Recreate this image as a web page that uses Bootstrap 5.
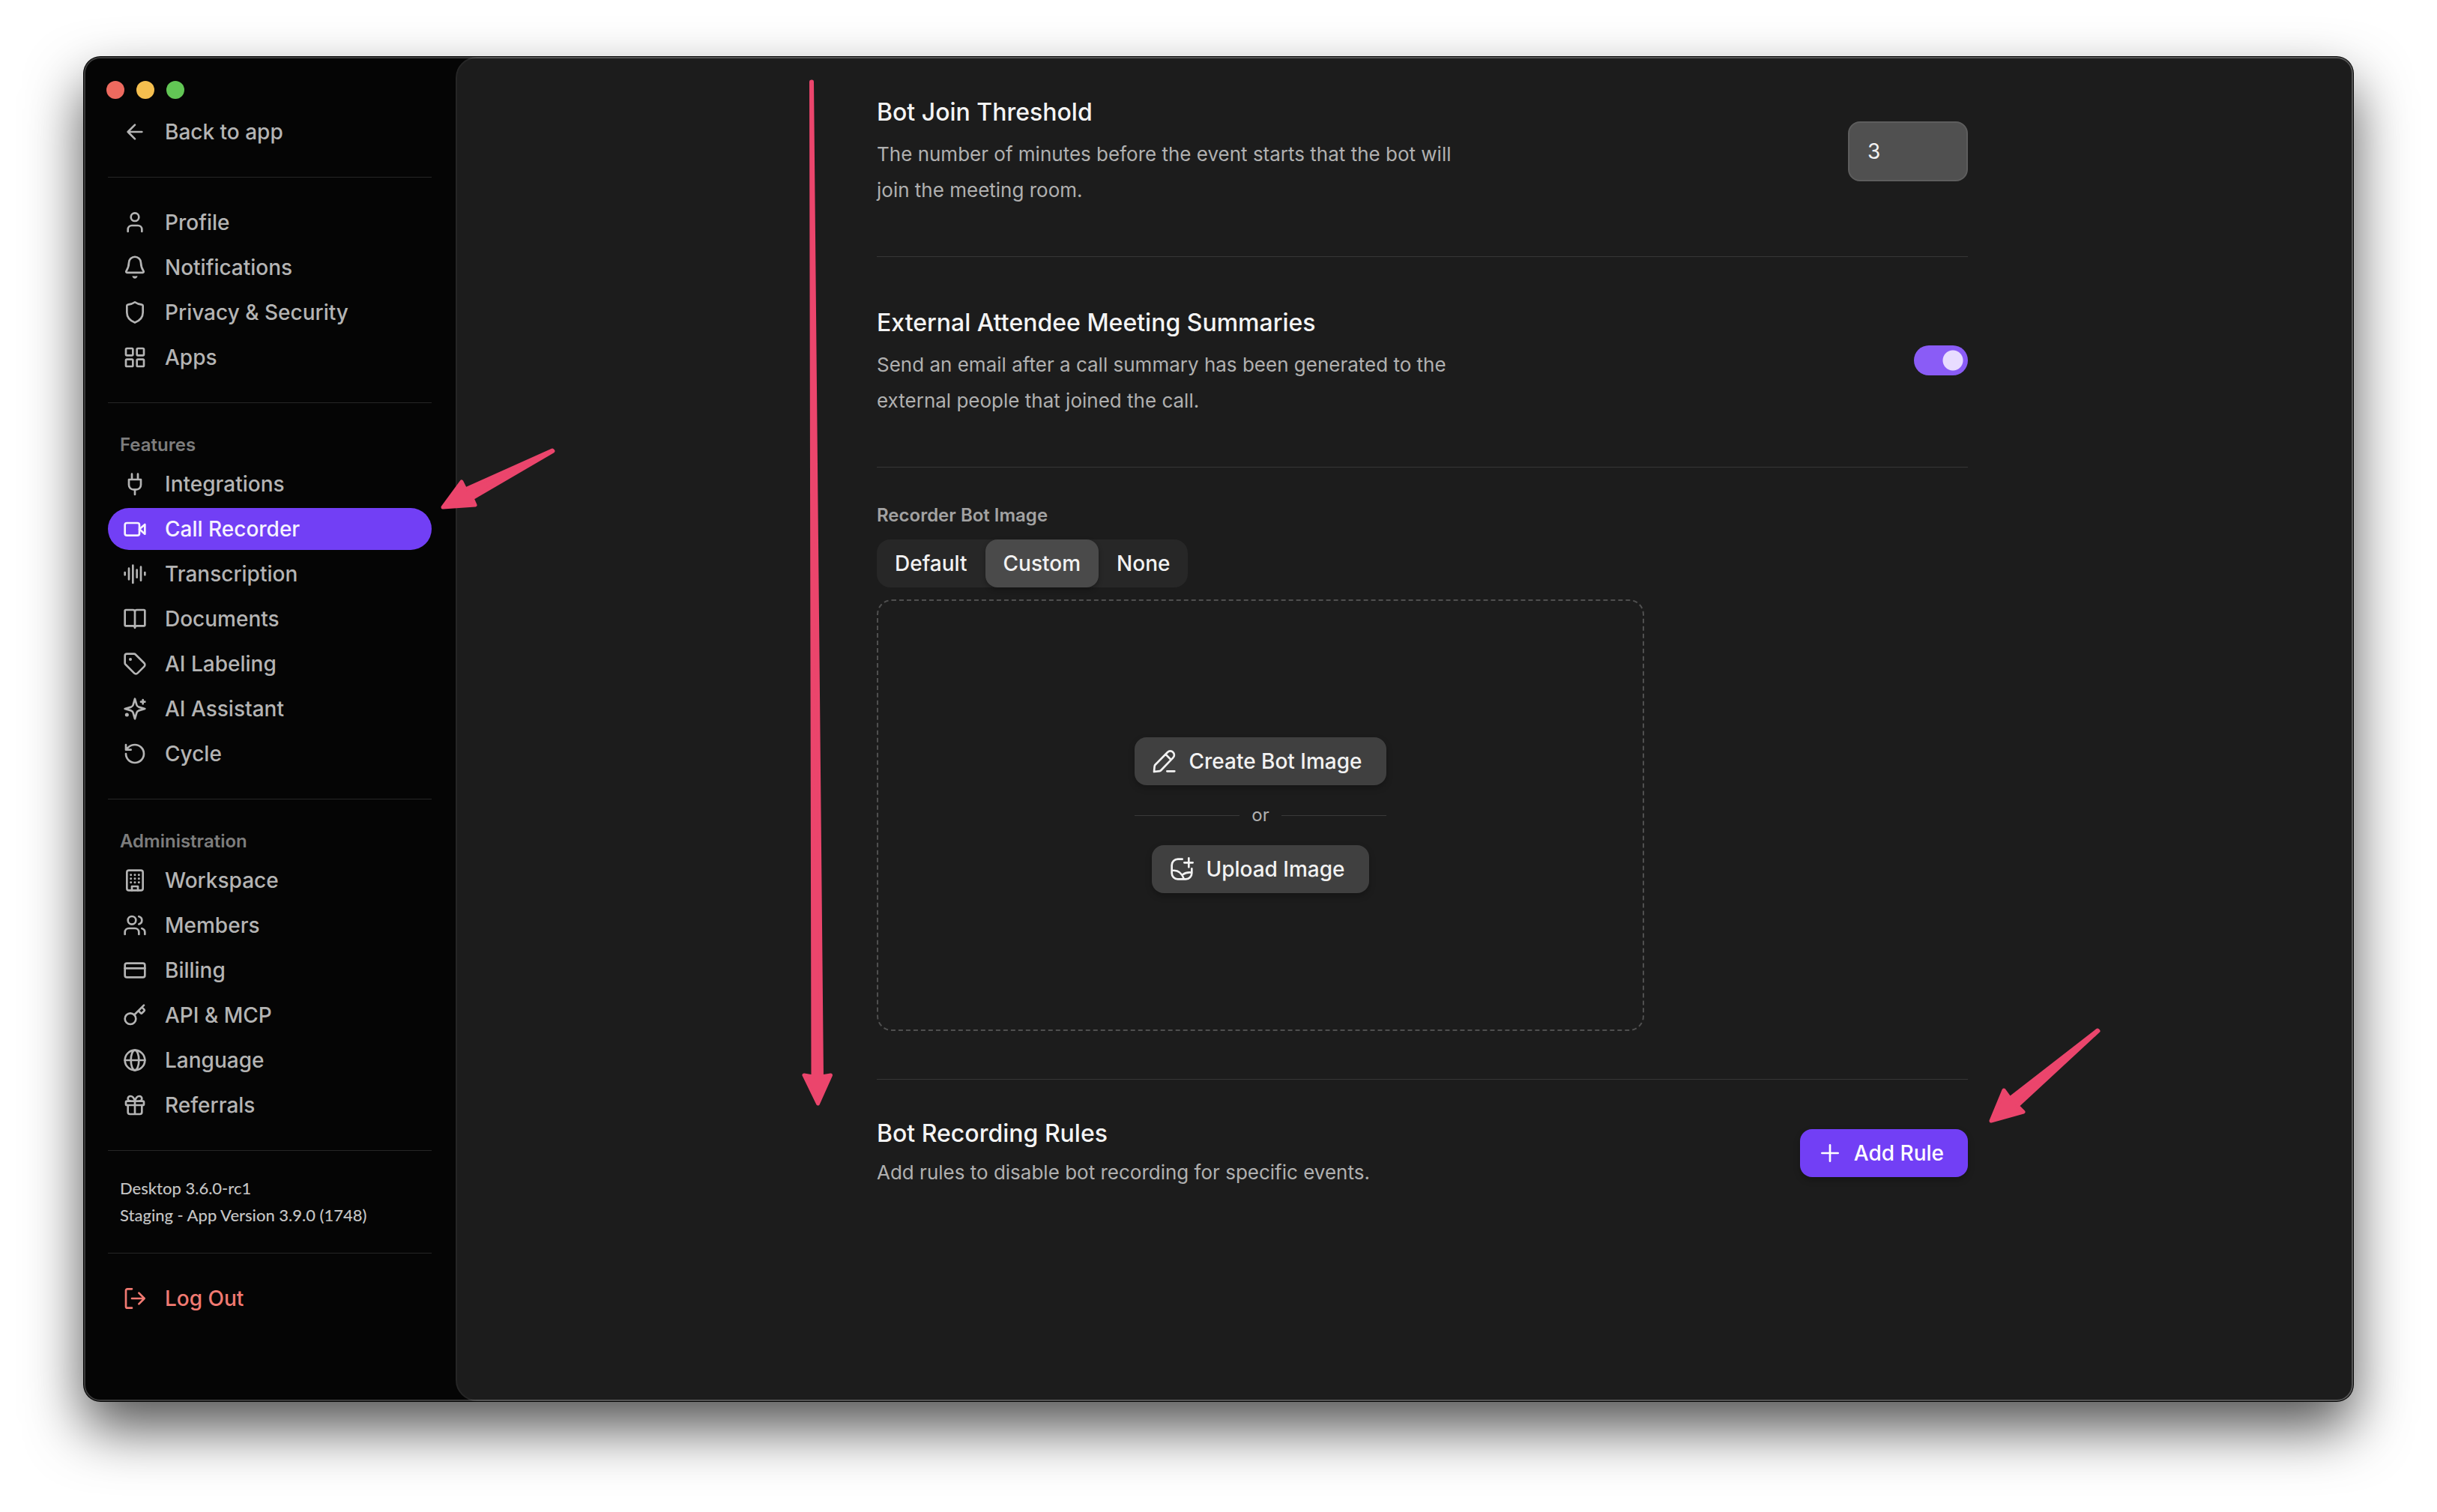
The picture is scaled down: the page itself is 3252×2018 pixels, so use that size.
<!DOCTYPE html>
<html lang="en" data-bs-theme="dark">
<head>
<meta charset="utf-8">
<meta name="viewport" content="width=device-width, initial-scale=1">
<title>Settings – Call Recorder</title>
<link href="https://cdn.jsdelivr.net/npm/bootstrap@5.3.0/dist/css/bootstrap.min.css" rel="stylesheet">
<style>
  :root { --accent: #723ff5; --line: #363636; --muted: #b0b0b0; --bright: #f2f2f2; }
  body { background: #fff; font-family: Inter, "Liberation Sans", sans-serif; font-size: 28px; line-height: 40px; color: var(--bright); }
  hr { border-top: 1px solid var(--line); opacity: 1; }
  svg.ico { width: 32px; height: 32px; flex: none; fill: none; stroke: currentColor; stroke-width: 2; stroke-linecap: round; stroke-linejoin: round; }
  svg.ico .solid { fill: currentColor; stroke: none; }

  .stage { min-height: 100vh; padding: 76px 112px 148px; }
  .app-window { background: #050505; border-radius: 22px; box-shadow: 0 0 0 1px #000, 0 36px 76px rgba(0,0,0,.68); }
  .app-window::after { content: ""; position: absolute; inset: 0; border: 2px solid rgba(255,255,255,.22); border-radius: inherit; pointer-events: none; }

  .side { width: 496px; padding: 32px; flex: none; }
  .side hr { margin: 32px 0; border-color: #262626; }
  .lights { height: 24px; gap: 16px; margin: 0 0 16px -2px; }
  .light { width: 24px; height: 24px; border-radius: 50%; }
  .side .nav { gap: 4px; }
  .side .nav-link { display: flex; align-items: center; gap: 24px; height: 56px; padding: 0 20px; border-radius: 28px; color: #b4b4b4; font-weight: 500; white-space: nowrap; }
  .side .nav-link.active { background: var(--accent); color: #f6f2ff; }
  .side .nav-link.logout { color: #f17a72; }
  .side h2 { font-size: 24px; line-height: 48px; font-weight: 600; color: #7d7d7d; padding-left: 16px; margin: 0; }
  .versions { font-family: Lato, sans-serif; font-size: 22px; line-height: 36px; font-weight: 500; color: #c4c4c4; padding-left: 16px; white-space: nowrap; }

  .panel { background: #1c1c1c; border: 2px solid #262626; border-radius: 28px 22px 22px 28px; padding: 48px 0 48px 48px; }
  .settings { width: 100%; max-width: 1456px; margin: 0 auto; }
  .settings hr { margin: 64px 0; }
  .settings hr.before-group { margin-bottom: 48px; }
  .setting-title { font-size: 32px; line-height: 48px; font-weight: 500; margin: 0; color: #f4f4f4; }
  .setting-text { font-size: 26px; line-height: 48px; color: var(--muted); margin: 0; max-width: 780px; }
  .minutes { width: 160px; height: 80px; padding: 0 24px; border: 2px solid #5d5d5d; border-radius: 16px; background: #505050; color: var(--bright); font-size: 28px; appearance: textfield; }
  .minutes:focus { background: #505050; color: var(--bright); }
  .minutes::-webkit-inner-spin-button { appearance: none; }
  .toggle.form-check-input { width: 72px; height: 40px; margin: 0 0 4px; border: 0; border-radius: 20px; }
  .toggle.form-check-input:checked { background: #8a5cf6 radial-gradient(circle at 52px 20px, #e8dcff 13px, transparent 14px) no-repeat; }

  .group-label { font-size: 24px; line-height: 32px; font-weight: 600; color: #a2a2a2; }
  .seg { background: #272727; border-radius: 18px; }
  .seg .btn { height: 64px; padding: 0 24px; border: 0; border-radius: 16px; line-height: 64px; font-size: 28px; font-weight: 500; color: var(--bright); }
  .seg .btn-check:checked + .btn { background: #4a4a4a; color: var(--bright); box-shadow: 0 3px 6px rgba(0,0,0,.3); }
  .drop { max-width: 1024px; height: 576px; border: 2px dashed #4f4f4f; border-radius: 20px; }
  .act { display: inline-flex; align-items: center; gap: 16px; height: 64px; padding: 0 32px 0 24px; border: 0; border-radius: 16px; font-size: 28px; font-weight: 500; color: var(--bright); background: #404040; box-shadow: 0 4px 8px rgba(0,0,0,.25); white-space: nowrap; }
  .act:hover { background: #4a4a4a; color: #fff; }
  .act.primary, .act.primary:hover { background: var(--accent); color: #fff; }
  .or-line { gap: 16px; font-size: 24px; line-height: 48px; color: var(--muted); }
  .or-line hr { margin: 0; border-color: #3a3a3a; }

  .pointer { position: absolute; fill: #eb456c; stroke: #eb456c; stroke-width: 5; stroke-linejoin: round; pointer-events: none; overflow: visible; }
  .pointer-nav { left: 476px; top: 520px; }
  .pointer-down { left: 956px; top: 28px; }
  .pointer-rule { right: 336px; top: 1295px; }
</style>
<script src="https://cdn.jsdelivr.net/npm/bootstrap@5.3.0/dist/js/bootstrap.bundle.min.js"></script>
</head>
<body>
<div class="stage d-flex">
  <div class="app-window position-relative d-flex flex-fill">

    <aside class="side">
      <div class="lights d-flex">
        <span class="light" style="background:#ed6a5f"></span>
        <span class="light" style="background:#f5bf4f"></span>
        <span class="light" style="background:#62c655"></span>
      </div>
      <nav class="nav flex-column">
        <a class="nav-link" href="#"><svg class="ico" viewBox="0 0 24 24"><path d="M19 12H5M12 19l-7-7 7-7"/></svg>Back to app</a>
      </nav>
      <hr>
      <nav class="nav flex-column">
        <a class="nav-link" href="#"><svg class="ico" viewBox="0 0 24 24"><circle cx="12" cy="6.500" r="4"/><path d="M19 21v-2a4 4 0 0 0-4-4H9a4 4 0 0 0-4 4v2"/></svg>Profile</a>
        <a class="nav-link" href="#"><svg class="ico" viewBox="0 0 24 24"><path d="M12 1.300a6 6 0 0 0-6 5.900c-.1 4.500-1.200 6.200-2.600 8.300-.5.900-.1 1.700.8 1.700h15.600c.9 0 1.300-.8.8-1.700-1.400-2.100-2.500-3.800-2.600-8.300a6 6 0 0 0-6-5.900z"/><path class="solid" d="M9.500 20.200c.8.500 4.200.5 5 0 .3 1.500-1 2.800-2.500 2.800s-2.800-1.300-2.500-2.800z"/></svg>Notifications</a>
        <a class="nav-link" href="#"><svg class="ico" viewBox="0 0 24 24"><path d="M12 1.700c1.900 1.400 4 2.200 7 2.500.6.100 1 .5 1 1.100V12c0 4.800-3 8.200-8 10.200-5-2-8-5.400-8-10.200V5.300c0-.6.400-1 1-1.100 3-.3 5.100-1.100 7-2.500z"/></svg>Privacy &amp; Security</a>
        <a class="nav-link" href="#"><svg class="ico" viewBox="0 0 24 24"><rect x="3" y="3" width="7" height="7" rx="1"/><rect x="14" y="3" width="7" height="7" rx="1"/><rect x="3" y="14" width="7" height="7" rx="1"/><rect x="14" y="14" width="7" height="7" rx="1"/></svg>Apps</a>
      </nav>
      <hr>
      <h2>Features</h2>
      <nav class="nav flex-column">
        <a class="nav-link" href="#"><svg class="ico" viewBox="0 0 24 24"><path d="M9 2v5.500M15 2v5.500M6 7.500h12V13a4.500 4.500 0 0 1-4.500 4.500h-3A4.500 4.500 0 0 1 6 13zM12 17.500v5"/></svg>Integrations</a>
        <a class="nav-link active" aria-current="page" href="#"><svg class="ico" viewBox="0 0 24 24"><rect x="2" y="6" width="14.500" height="12.500" rx="2"/><path d="M16.500 12.200l5.500-4.700v9.500z"/></svg>Call Recorder</a>
        <a class="nav-link" href="#"><svg class="ico" viewBox="0 0 24 24"><path d="M2 10.500v2.500M6 6.500v11M10 3.500v17.500M14 8v7.500M18 5v13.500M22 10.500v2.500"/></svg>Transcription</a>
        <a class="nav-link" href="#"><svg class="ico" viewBox="0 0 24 24"><path d="M12 5a2 2 0 0 0-2-2H3a1 1 0 0 0-1 1v14a1 1 0 0 0 1 1h7a2 2 0 0 1 2 2 2 2 0 0 1 2-2h7a1 1 0 0 0 1-1V4a1 1 0 0 0-1-1h-7a2 2 0 0 0-2 2zM12 5v16"/></svg>Documents</a>
        <a class="nav-link" href="#"><svg class="ico" viewBox="0 0 24 24"><path d="M12.600 2.600A2 2 0 0 0 11.200 2H4a2 2 0 0 0-2 2v7.200a2 2 0 0 0 .6 1.400l8.700 8.700a2.400 2.400 0 0 0 3.400 0l6.600-6.600a2.400 2.400 0 0 0 0-3.400z"/><circle class="solid" cx="7.500" cy="7.500" r="1.500"/></svg>AI Labeling</a>
        <a class="nav-link" href="#"><svg class="ico" viewBox="0 0 24 24"><path d="M12 2l1.800 6.200q.5 1.500 2 2L22 12l-6.200 1.800q-1.500.5-2 2L12 22l-1.800-6.200q-.5-1.500-2-2L2 12l6.200-1.800q1.500-.5 2-2zM20 3v4M18 5h4"/><circle class="solid" cx="4" cy="18" r="1.900"/></svg>AI Assistant</a>
        <a class="nav-link" href="#"><svg class="ico" viewBox="0 0 24 24"><path d="M3 12a9 9 0 1 0 9-9 9.750 9.750 0 0 0-6.740 2.740L3 8M3 3v5h5"/></svg>Cycle</a>
      </nav>
      <hr>
      <h2>Administration</h2>
      <nav class="nav flex-column">
        <a class="nav-link" href="#"><svg class="ico" viewBox="0 0 24 24"><rect x="4" y="2" width="16" height="20" rx="2"/><path d="M9 22v-4h6v4"/><g class="solid"><circle cx="8" cy="6.500" r="1.100"/><circle cx="12" cy="6.500" r="1.100"/><circle cx="16" cy="6.500" r="1.100"/><circle cx="8" cy="10.300" r="1.100"/><circle cx="12" cy="10.300" r="1.100"/><circle cx="16" cy="10.300" r="1.100"/><circle cx="8" cy="14.100" r="1.100"/><circle cx="12" cy="14.100" r="1.100"/><circle cx="16" cy="14.100" r="1.100"/></g></svg>Workspace</a>
        <a class="nav-link" href="#"><svg class="ico" viewBox="0 0 24 24"><circle cx="9" cy="7" r="4"/><path d="M16 21v-2a4 4 0 0 0-4-4H6a4 4 0 0 0-4 4v2M22 21v-2a4 4 0 0 0-3-3.870M16 3.130a4 4 0 0 1 0 7.750"/></svg>Members</a>
        <a class="nav-link" href="#"><svg class="ico" viewBox="0 0 24 24"><rect x="2" y="5" width="20" height="14" rx="2"/><path d="M2 10h20"/></svg>Billing</a>
        <a class="nav-link" href="#"><svg class="ico" viewBox="0 0 24 24"><circle cx="7.500" cy="15.500" r="5.500"/><path d="M21 2l-9.600 9.600M15.500 7.500l2.300 2.300a1 1 0 0 0 1.400 0l2.100-2.100a1 1 0 0 0 0-1.400L19 4"/></svg>API &amp; MCP</a>
        <a class="nav-link" href="#"><svg class="ico" viewBox="0 0 24 24"><circle cx="12" cy="12" r="10"/><ellipse cx="12" cy="12" rx="4" ry="10"/><path d="M2 12h20"/></svg>Language</a>
        <a class="nav-link" href="#"><svg class="ico" viewBox="0 0 24 24"><rect x="3" y="8" width="18" height="4" rx="1"/><path d="M12 8v13M19 12v7a2 2 0 0 1-2 2H7a2 2 0 0 1-2-2v-7M7.500 8a2.500 2.500 0 0 1 0-5A4.800 8 0 0 1 12 8a4.800 8 0 0 1 4.500-5 2.500 2.500 0 0 1 0 5"/></svg>Referrals</a>
      </nav>
      <hr>
      <div class="versions"><div>Desktop 3.6.0-rc1</div><div>Staging - App Version 3.9.0 (1748)</div></div>
      <hr>
      <nav class="nav flex-column">
        <a class="nav-link logout" href="#"><svg class="ico" viewBox="0 0 24 24"><path d="M9 21.500H4.500A1.500 1.500 0 0 1 3 20V4a1.500 1.500 0 0 1 1.500-1.500H9M9 12h12.500M16 6.500l5.500 5.500-5.500 5.500"/></svg>Log Out</a>
      </nav>
    </aside>

    <main class="panel flex-fill">
      <div class="settings">
        <section class="d-flex align-items-center justify-content-between gap-4">
          <div class="d-flex flex-column gap-2">
            <h3 class="setting-title"><label for="minutes">Bot Join Threshold</label></h3>
            <p class="setting-text">The number of minutes before the event starts that the bot will join the meeting room.</p>
          </div>
          <input class="minutes form-control flex-shrink-0" id="minutes" type="number" value="3">
        </section>
        <hr>
        <section class="d-flex align-items-center justify-content-between gap-4">
          <div class="d-flex flex-column gap-2">
            <h3 class="setting-title"><label for="summaries">External Attendee Meeting Summaries</label></h3>
            <p class="setting-text">Send an email after a call summary has been generated to the external people that joined the call.</p>
          </div>
          <input class="toggle form-check-input flex-shrink-0" id="summaries" type="checkbox" role="switch" checked>
        </section>
        <hr class="before-group">
        <section class="d-flex flex-column gap-3" role="group" aria-labelledby="bot-image">
          <div class="group-label" id="bot-image">Recorder Bot Image</div>
          <div class="seg d-flex align-self-start">
            <input class="btn-check" type="radio" name="image" id="img-default"><label class="btn" for="img-default">Default</label>
            <input class="btn-check" type="radio" name="image" id="img-custom" checked><label class="btn" for="img-custom">Custom</label>
            <input class="btn-check" type="radio" name="image" id="img-none"><label class="btn" for="img-none">None</label>
          </div>
          <div class="drop d-flex align-items-center justify-content-center">
            <div class="d-flex flex-column align-items-center gap-3">
              <button type="button" class="btn act"><svg class="ico" viewBox="0 0 24 24"><path d="M1.500 22.500l.5-5.500a3 3 0 0 1 .8-1.600L15 3a3.800 3.800 0 0 1 5.500 0 3.800 3.800 0 0 1 0 5.500L8.500 21a3 3 0 0 1-1.500.9zM13 5l5.500 5.500M14.500 22h7.500"/></svg>Create Bot Image</button>
              <div class="or-line d-flex align-items-center align-self-stretch"><hr class="flex-fill">or<hr class="flex-fill"></div>
              <button type="button" class="btn act"><svg class="ico" viewBox="0 0 24 24"><path d="M12.500 2H8a6 6 0 0 0-6 6v8a6 6 0 0 0 6 6h8a6 6 0 0 0 6-6v-4.500M19 1v9M14.500 5.500h8.500M2 13.500c6-1 10 2.500 12 8M13 17.500c2.500-2 5.500-2.500 9-2"/></svg>Upload Image</button>
            </div>
          </div>
        </section>
        <hr class="before-group">
        <section class="d-flex align-items-center justify-content-between gap-4">
          <div class="d-flex flex-column gap-1">
            <h3 class="setting-title">Bot Recording Rules</h3>
            <p class="setting-text">Add rules to disable bot recording for specific events.</p>
          </div>
          <button type="button" class="btn act primary"><svg class="ico" viewBox="0 0 24 24"><path d="M12 4v16M4 12h16"/></svg>Add Rule</button>
        </section>
      </div>
    </main>

    <svg class="pointer pointer-nav" width="154" height="86" viewBox="0 0 154 86"><path d="M149 5l1 1L42 69l4 9L3 81 28 47l5 10z"/></svg>
    <svg class="pointer pointer-down" width="46" height="1374" viewBox="0 0 46 1374"><path d="M14.500 5h1L28.500 1333l12-2L23.500 1369 5 1331l12 2z"/></svg>
    <svg class="pointer pointer-rule" width="152" height="132" viewBox="0 0 152 132"><path d="M147 4l1 1L40 105l8 8L5 125 22 84l8 11z"/></svg>
  </div>
</div>
</body>
</html>
